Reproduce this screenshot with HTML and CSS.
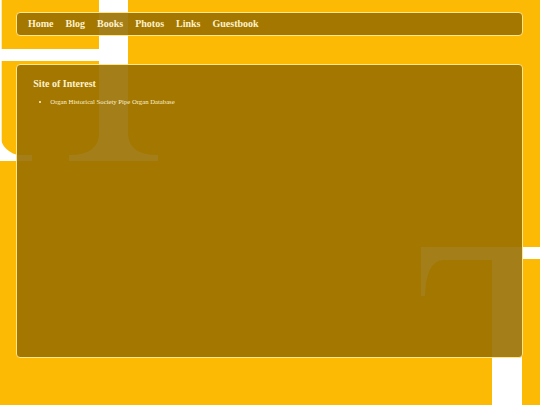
FILE: index.html
```html
<!DOCTYPE html>
<html lang="en">
<head>
<meta charset="utf-8">
<title>Links</title>
<link rel="stylesheet" href="styles.css">
</head>
<body>
<svg class="backdrop" width="540" height="405" viewBox="0 0 540 405" aria-hidden="true">
  <g fill="#ffffff">
    <rect x="0" y="0" width="1.7" height="161"/>
    <rect x="0" y="49" width="99" height="12"/>
    <path d="M99 0 H128 V133 Q128 155 158 155 V161 H69 V155 Q99 155 99 133 Z"/>
    <path d="M0 134 A21 21 0 0 0 21 155 H32 V161 H0 Z"/>
    <path d="M421 247 H540 V259 H522 V405 H492 V260 H443 Q426 261 425 296 H421 Z"/>
  </g>
</svg>
<div class="page">
  <nav class="nav">
    <ul class="nav-list">
      <li><a class="nav-link" href="#">Home</a></li>
      <li><a class="nav-link" href="#">Blog</a></li>
      <li><a class="nav-link" href="#">Books</a></li>
      <li><a class="nav-link" href="#">Photos</a></li>
      <li><a class="nav-link" href="#">Links</a></li>
      <li><a class="nav-link" href="#">Guestbook</a></li>
    </ul>
  </nav>
  <main class="content">
    <h2 class="section-title">Site of Interest</h2>
    <ul class="link-list">
      <li><a class="site-link" href="#">Organ Historical Society Pipe Organ Database</a></li>
    </ul>
  </main>
</div>
</body>
</html>
```

FILE: styles.css
```css
html, body {
  margin: 0;
  padding: 0;
}

body {
  background: #fdba04;
  width: 540px;
  height: 405px;
  overflow: hidden;
  position: relative;
  font-family: "Liberation Serif", "Times New Roman", serif;
  color: #fff2cc;
}

.backdrop {
  position: absolute;
  top: 0;
  left: 0;
  z-index: 0;
  display: block;
}

.page {
  position: relative;
  z-index: 1;
  padding-top: 12px;
}

.nav {
  margin: 0 16.7px 0 16px;
  background: rgba(153, 112, 0, 0.9);
  border: 1px solid #ffe58c;
  border-radius: 4px;
  height: 24px;
  box-sizing: border-box;
}

.nav-list {
  list-style: none;
  margin: 0;
  padding: 0 5px;
  display: flex;
  align-items: center;
  height: 22px;
}

.nav-link {
  display: block;
  padding: 0 6px;
  font-size: 10px;
  font-weight: bold;
  line-height: 22px;
  color: #fff2cc;
  text-decoration: none;
}

.content {
  margin: 27.5px 16.7px 0 16px;
  background: rgba(153, 112, 0, 0.9);
  border: 1px solid #ffe58c;
  border-radius: 4px;
  height: 294px;
  box-sizing: border-box;
  padding: 13.6px 16.3px;
}

.section-title {
  margin: 0;
  font-size: 10px;
  line-height: 12px;
  font-weight: bold;
  color: #fff2cc;
}

.link-list {
  margin: 7.9px 0 0 0;
  padding-left: 17px;
  font-size: 6.7px;
  line-height: 8px;
}

.site-link {
  color: #fff2cc;
  text-decoration: none;
}
```
